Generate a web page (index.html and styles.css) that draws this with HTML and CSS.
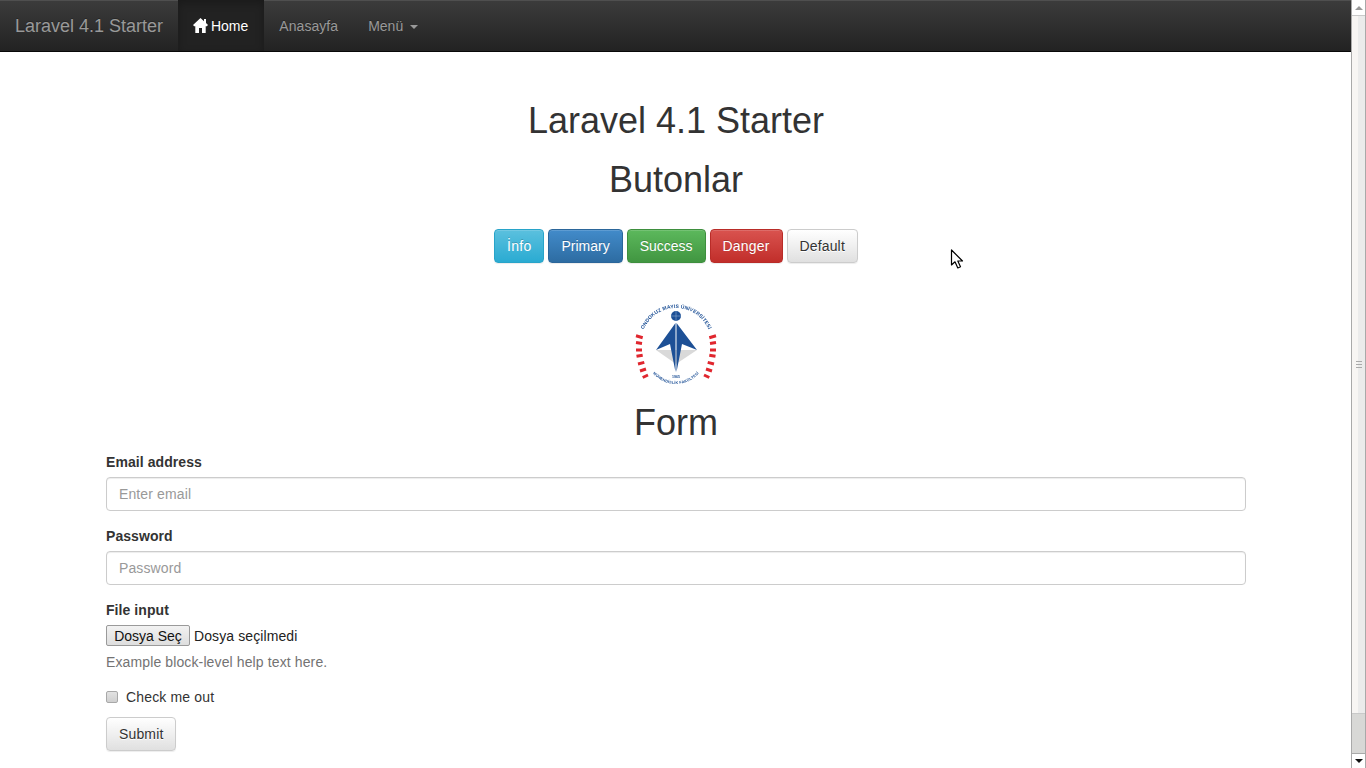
FILE: index.html
```html
<!DOCTYPE html>
<html lang="tr">
<head>
<meta charset="utf-8">
<title>Laravel 4.1 Starter</title>
<link rel="stylesheet" href="styles.css">
</head>
<body>
<div class="window">
  <div class="page">
    <nav class="navbar">
      <a class="brand" href="#">Laravel 4.1 Starter</a>
      <ul class="nav">
        <li class="active"><a href="#"><svg class="home-icon" viewBox="0 0 15 15" width="15" height="15"><path fill="#fff" d="M7.500 0 L11 3.200 V1 H13 V5 L15 7 L13.800 8.200 H12.700 V15 H9 V10 H6 V15 H2.300 V8.200 H1.200 L0 7 Z"/></svg> Home</a></li>
        <li><a class="nudge" href="#">Anasayfa</a></li>
        <li><a href="#">Menü <span class="caret"></span></a></li>
      </ul>
    </nav>
    <main class="container">
      <h1 class="title first">Laravel 4.1 Starter</h1>
      <h1 class="title second">Butonlar</h1>
      <div class="buttons">
        <a class="btn btn-info" href="#">İnfo</a>
        <a class="btn btn-primary" href="#">Primary</a>
        <a class="btn btn-success" href="#">Success</a>
        <a class="btn btn-danger" href="#">Danger</a>
        <a class="btn btn-default" href="#">Default</a>
      </div>
      <div class="logo">
        <svg viewBox="0 0 82 84" width="82" height="84">
          <defs>
            <path id="arc-top" d="M6 41 A35 35 0 0 1 76 41"/>
            <path id="arc-bottom" d="M15 67 A30 30 0 0 0 67 67"/>
          </defs>
          <text class="logo-text"><textPath href="#arc-top" startOffset="50%" text-anchor="middle">ONDOKUZ MAYIS ÜNİVERSİTESİ</textPath></text>
          <text class="logo-text small"><textPath href="#arc-bottom" startOffset="50%" text-anchor="middle">MÜHENDİSLİK FAKÜLTESİ</textPath></text>
          <g class="logo-dashes">
            <path d="M1 33.700 L7.700 35.700 M1 40.500 L7 41.500 M1 48 L7 48 M1.500 54.200 L7.700 53.200 M3 62 L9.300 60.400 M5 69 L11 67 M7.700 75.500 L13 73"/>
            <path d="M81 33.700 L74.300 35.700 M81 40.500 L75 41.500 M81 48 L75 48 M80.500 54.200 L74.300 53.200 M79 62 L72.700 60.400 M77 69 L71 67 M74.300 75.500 L69 73"/>
          </g>
          <path fill="#d9d9d9" d="M21 48 L62 48 L41 62 Z"/>
          <path fill="#1d5096" d="M40.500 21 L21 48 L35 42 L40.500 70 Z"/>
          <path fill="#1d5096" d="M41.500 21 L62 48 L47 42 L41.500 70 Z"/>
          <circle cx="41" cy="14" r="5" fill="#1d5096"/>
          <path d="M36 14 H46 M41 9 V19" stroke="#9db8da" stroke-width=".5"/>
          <text class="logo-year" x="41" y="75.500" text-anchor="middle">1965</text>
        </svg>
      </div>
      <h1 class="title form-title">Form</h1>
      <form class="form">
        <div class="form-group">
          <label class="field-label" for="email">Email address</label>
          <input class="form-control" id="email" type="email" placeholder="Enter email">
        </div>
        <div class="form-group">
          <label class="field-label" for="password">Password</label>
          <input class="form-control" id="password" type="password" placeholder="Password">
        </div>
        <div class="form-group">
          <span class="field-label">File input</span>
          <div class="file-input"><button class="file-button" type="button">Dosya Seç</button><span class="file-name">Dosya seçilmedi</span></div>
          <p class="help-block">Example block-level help text here.</p>
        </div>
        <label class="checkbox"><input class="check-box" type="checkbox"> Check me out</label>
        <button class="btn btn-default" type="button">Submit</button>
      </form>
    </main>
  </div>
  <div class="scrollbar">
    <div class="sb-button sb-up"><span class="arrow-up"></span></div>
    <div class="sb-thumb"><span class="grip"></span><span class="grip"></span><span class="grip"></span></div>
    <div class="sb-track"></div>
    <div class="sb-button sb-down"><span class="arrow-down"></span></div>
  </div>
  <svg class="cursor" viewBox="0 0 14 21" width="14" height="21"><path fill="#fff" stroke="#000" stroke-width="1.200" stroke-linejoin="round" d="M1.500 1 V16 L5 12.800 L7.800 19 L10.500 17.800 L7.800 12 H12.500 Z"/></svg>
</div>
</body>
</html>
```
FILE: styles.css
```css
* { box-sizing: border-box; }
html, body { margin: 0; height: 100%; overflow: hidden; }
body {
  font-family: "Liberation Sans", Arial, sans-serif;
  font-size: 14px;
  line-height: 20px;
  color: #333;
  background: #fff;
}
a { text-decoration: none; }
.window { display: flex; width: 1366px; height: 768px; position: relative; overflow: hidden; }
.page { width: 1351px; flex: none; }

.navbar {
  display: flex;
  height: 52px;
  padding-left: 0;
  background: linear-gradient(to bottom, #3c3c3c 0, #222 100%);
  border-bottom: 1px solid #080808;
  box-shadow: inset 0 1px 0 rgba(255,255,255,.1);
}
.brand {
  padding: 16px 15px 14px;
  font-size: 18px;
  color: #999;
  text-shadow: 0 -1px 0 rgba(0,0,0,.25);
}
.nav { display: flex; margin: 0; padding: 0; list-style: none; }
.nav a {
  display: block;
  padding: 16px 15px 14px;
  height: 51px;
  color: #999;
  text-shadow: 0 -1px 0 rgba(0,0,0,.25);
}
.nav .nudge { letter-spacing: .06px; }
.nav .active a {
  padding-right: 16px;
  color: #fff;
  background: #222;
  box-shadow: inset 0 3px 9px rgba(0,0,0,.25);
}
.home-icon { vertical-align: -2px; margin-right: -1px; }
.caret {
  display: inline-block;
  width: 0;
  height: 0;
  margin-left: 3px;
  vertical-align: middle;
  border-top: 4px solid #999;
  border-left: 4px solid transparent;
  border-right: 4px solid transparent;
}

.container { width: 1170px; margin: 0 0 0 91px; padding: 0 15px; }
.title {
  font-size: 36px;
  font-weight: 500;
  line-height: 40px;
  margin: 20px 0 0;
  text-align: center;
}
.title.first { margin-top: 49px; }
.title.second { margin-top: 19px; }
.buttons { display: flex; justify-content: center; gap: 4px; margin-top: 29px; }
.btn {
  display: inline-block;
  height: 34px;
  padding: 6px 12px;
  border: 1px solid transparent;
  border-radius: 4px;
  font: inherit;
  color: #fff;
  text-shadow: 0 -1px 0 rgba(0,0,0,.2);
  box-shadow: inset 0 1px 0 rgba(255,255,255,.15), 0 1px 1px rgba(0,0,0,.075);
}
.btn-info { background: linear-gradient(to bottom, #5bc0de 0, #2aabd2 100%); border-color: #28a4c9; letter-spacing: .25px; }
.btn-primary { background: linear-gradient(to bottom, #428bca 0, #2d6ca2 100%); border-color: #2b669a; }
.btn-success { background: linear-gradient(to bottom, #5cb85c 0, #419641 100%); border-color: #3e8f3e; }
.btn-danger { background: linear-gradient(to bottom, #d9534f 0, #c12e2a 100%); border-color: #b92c28; letter-spacing: .17px; }
.btn-default {
  background: linear-gradient(to bottom, #fff 0, #e0e0e0 100%);
  border-color: #ccc;
  color: #333;
  text-shadow: 0 1px 0 #fff;
  letter-spacing: .15px;
}

.logo { display: flex; justify-content: center; margin-top: 39px; height: 84px; }
.logo svg { filter: blur(.3px); }
.logo-text { font-size: 5px; font-weight: 700; fill: #1d5096; letter-spacing: .15px; }
.logo-text.small { font-size: 3.800px; letter-spacing: .2px; }
.logo-year { font-size: 3.500px; font-weight: 700; fill: #1d5096; }
.logo-dashes path { stroke: #e0262e; stroke-width: 3; fill: none; }
.form-title { margin-top: 17px; }

.form { margin-top: 9px; }
.form-group { margin-bottom: 15px; }
.field-label { display: block; font-weight: 700; margin-bottom: 5px; letter-spacing: .07px; }
.form-control {
  display: block;
  width: 100%;
  height: 34px;
  padding: 6px 12px;
  font: inherit;
  color: #555;
  background: #fff;
  border: 1px solid #ccc;
  border-radius: 4px;
  box-shadow: inset 0 1px 1px rgba(0,0,0,.075);
}
.form-control::placeholder { color: #999; opacity: 1; letter-spacing: .12px; }
.file-input { display: flex; align-items: center; height: 21px; }
.file-button {
  width: 84px;
  height: 21px;
  padding: 0;
  margin-right: 4px;
  font: inherit;
  color: #111;
  background: linear-gradient(to bottom, #f2f2f2, #dedede);
  border: 1px solid #9a9a9a;
  border-radius: 2px;
}
.file-name { color: #222; letter-spacing: .1px; }
.help-block { margin: 6px 0 10px; color: #737373; letter-spacing: .12px; }
.checkbox { display: flex; align-items: center; gap: 8px; height: 20px; margin: 10px 0; letter-spacing: .16px; }
.check-box {
  appearance: none;
  width: 12px;
  height: 12px;
  margin: 0;
  border: 1px solid #a8a8a8;
  border-radius: 2px;
  background: linear-gradient(to bottom, #e2e2e2, #cfcfcf);
}

.scrollbar {
  display: flex;
  flex-direction: column;
  width: 15px;
  flex: none;
  background: #fff;
  border-left: 1px solid #a9a9a9;
  border-right: 1px solid #a9a9a9;
}
.sb-button { height: 15px; display: flex; align-items: center; justify-content: center; flex: none; background: #fff; }
.sb-thumb {
  height: 699px;
  flex: none;
  display: flex;
  flex-direction: column;
  align-items: center;
  justify-content: center;
  gap: 2px;
  background: linear-gradient(to right, #f7f5f3 0, #f7f5f3 50%, #ebebeb 50%, #ebebeb 100%);
  border-top: 1px solid #c9c9c9;
  border-bottom: 1px solid #c9c9c9;
}
.grip { display: block; width: 6px; height: 1px; background: #aaa; }
.sb-track { flex: 1; background: #d8d8d6; }
.sb-down { border-top: 1px solid #a9a9a9; border-radius: 0 0 4px 4px; }
.arrow-up { border-left: 4px solid transparent; border-right: 4px solid transparent; border-bottom: 4px solid #999; }
.arrow-down { border-left: 4px solid transparent; border-right: 4px solid transparent; border-top: 4px solid #111; }
.cursor { position: absolute; left: 950px; top: 249px; }
```
